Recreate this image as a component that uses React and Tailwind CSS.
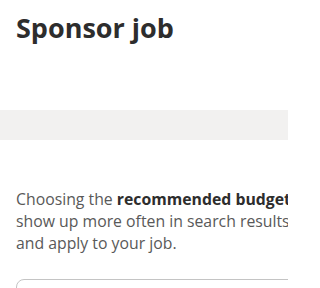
export default function App() {
  return (
    <div className="w-[288px] h-[288px] overflow-hidden bg-white" style={{ fontFamily: '"Open Sans", "Noto Sans", sans-serif' }}>
      <div className="w-[440px]">
        <div className="px-4 pt-[8px] h-[110px]">
          <h1 className="text-[27px] leading-[40px] font-bold text-[#2d2d2d]">Sponsor job</h1>
        </div>
        <div className="h-[30px] bg-[#f2f1f0]" />
        <div className="px-4 pt-[48px]">
          <p className="text-[15.8px] leading-[22px] text-[#595959] whitespace-nowrap">
            Choosing the <span className="font-bold text-[#2d2d2d]">recommended budget</span> will help your job
            <br />
            show up more often in search results so more people can see
            <br />
            and apply to your job.
          </p>
          <div className="mt-[25px] h-[60px] rounded-lg border border-[#c4c4c4]" />
        </div>
      </div>
    </div>
  );
}
